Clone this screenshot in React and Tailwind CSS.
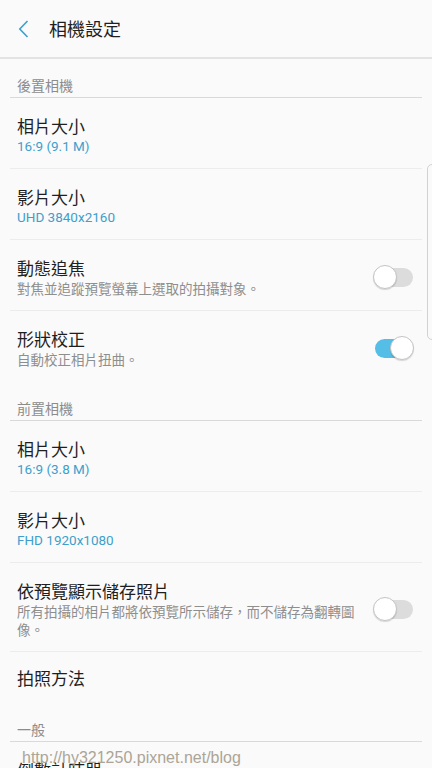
import React from 'react';

const cjk = { fontFamily: '"Noto Sans CJK TC", "Noto Sans", sans-serif' };
const latin = { fontFamily: 'Roboto, "Noto Sans CJK TC", sans-serif' };

const Toggle = ({ on }) => (
  <div className="relative w-[40px] h-[24px] shrink-0 flex items-center">
    <div
      className={`absolute left-[2px] right-0 h-[19px] rounded-full ${on ? 'bg-[#55bee6]' : 'bg-[#dcdcdc]'}`}
    />
    <div
      className={`absolute top-0 w-[24px] h-[24px] rounded-full bg-white border border-[#c4c4c4] shadow-[0_1px_1px_rgba(0,0,0,0.15)] ${on ? 'right-[-1px]' : 'left-0'}`}
    />
  </div>
);

const SectionHeader = ({ label }) => (
  <div className="pt-[16px] pb-[2px] px-[7px] border-b border-[#d9d9d9]">
    <div className="text-[14px] leading-[20px] text-[#8c8c8c]" style={cjk}>{label}</div>
  </div>
);

// last row of a section has no divider, so it gets one more px of padding
const Item = ({ title, value, desc, toggle, last }) => (
  <div
    className={`flex items-center gap-[16px] pl-[7px] pr-[9px] ${value || desc ? 'pt-[17px]' : 'pt-[15px]'} ${last ? 'pb-[14px]' : 'pb-[13px] border-b border-[#ececec]'}`}
  >
    <div className="flex-1 min-w-0">
      <div className="text-[17px] leading-[22px] h-[22px] text-[#1f1f1f]" style={cjk}>{title}</div>
      {value && (
        <div className="text-[13.5px] leading-[18px] h-[18px] text-[#3d9fcc]" style={latin}>{value}</div>
      )}
      {desc && (
        <div className="text-[13.5px] leading-[18px] text-[#8e8e8e]" style={cjk}>{desc}</div>
      )}
    </div>
    {toggle !== undefined && <Toggle on={toggle} />}
  </div>
);

const App = () => {
  return (
    <div className="relative w-[432px] h-[768px] overflow-hidden bg-[#fafafa]">
      <div className="h-[59px] flex items-center border-b-2 border-[#e3e3e3]">
        <svg className="ml-[18px]" width="11" height="18" viewBox="0 0 11 18" fill="none">
          <path d="M9.5 1 L1.8 9 L9.5 17" stroke="#3d9fcc" strokeWidth="1.6" />
        </svg>
        <div className="ml-[20px] text-[18px] text-[#1f1f1f]" style={cjk}>相機設定</div>
      </div>

      <div className="px-[10px]">
        <SectionHeader label="後置相機" />
        <Item title="相片大小" value="16:9 (9.1 M)" />
        <Item title="影片大小" value="UHD 3840x2160" />
        <Item title="動態追焦" desc="對焦並追蹤預覽螢幕上選取的拍攝對象。" toggle={false} />
        <Item title="形狀校正" desc="自動校正相片扭曲。" toggle={true} last />

        <SectionHeader label="前置相機" />
        <Item title="相片大小" value="16:9 (3.8 M)" />
        <Item title="影片大小" value="FHD 1920x1080" />
        <Item
          title="依預覽顯示儲存照片"
          desc="所有拍攝的相片都將依預覽所示儲存，而不儲存為翻轉圖像。"
          toggle={false}
        />
        <Item title="拍照方法" last />

        <SectionHeader label="一般" />
        <Item title="倒數計時器" value="關閉" />
      </div>

      <div className="absolute right-[-6px] top-[164px] h-[176px] w-[11px] rounded-[5px] border border-[#d2d2d2] bg-[#fafafa]" />

      <div
        className="absolute left-[22px] top-[749px] text-[16px] leading-[18px] text-[#a49c8c] opacity-90"
        style={{ fontFamily: '"Liberation Sans", Arial, sans-serif' }}
      >
        http://hy321250.pixnet.net/blog
      </div>
    </div>
  );
};

export default App;
